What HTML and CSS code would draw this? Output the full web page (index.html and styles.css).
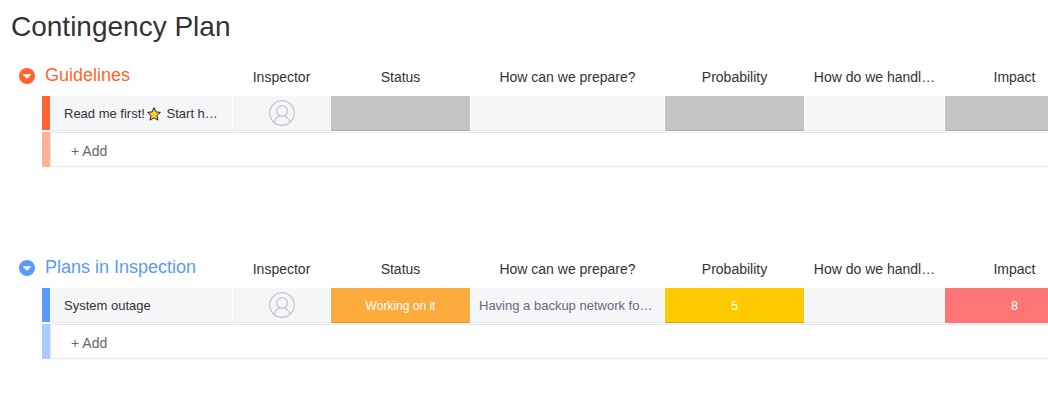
FILE: index.html
```html
<!DOCTYPE html>
<html lang="en">
<head>
    <meta charset="UTF-8">
    <meta name="viewport" content="width=device-width, initial-scale=1.0">
    <title>Contingency Plan</title>
    <link rel="stylesheet" href="styles.css">
</head>
<body>
    <!-- shared icons -->
    <svg class="icon-defs" aria-hidden="true">
        <symbol id="icon-collapse" viewBox="0 0 16 16">
            <circle cx="8" cy="8" r="8" fill="currentColor"/>
            <path d="M4.2 6.2h7.6q.7.2.2.8L8.6 10.2q-.6.5-1.2 0L4 7q-.5-.6.2-.8z" fill="#fff"/>
        </symbol>
        <symbol id="icon-person" viewBox="0 0 26 26">
            <g fill="none" stroke="currentColor" stroke-width="1.3">
                <circle cx="13" cy="13" r="12.3"/>
                <circle cx="13" cy="11" r="5.4"/>
                <path d="M4.9 22.2C6.1 18.8 8.7 16.9 10.7 16M15.3 16c2 .9 4.6 2.8 5.8 6.2"/>
            </g>
        </symbol>
    </svg>

    <main class="board">
        <h1 class="board-title">Contingency Plan</h1>

        <!-- Guidelines -->
        <table class="group group-orange">
            <colgroup>
                <col class="col-gutter">
                <col class="col-bar">
                <col class="col-name">
                <col class="col-person">
                <col class="col-status">
                <col class="col-text">
                <col class="col-status">
                <col class="col-status">
                <col class="col-status">
            </colgroup>
            <thead>
                <tr>
                    <th colspan="3" scope="col">
                        <div class="group-header">
                            <button class="collapse-button" type="button" aria-label="Collapse group">
                                <svg class="collapse-icon"><use href="#icon-collapse"/></svg>
                            </button>
                            <h2 class="group-title">Guidelines</h2>
                        </div>
                    </th>
                    <th class="column-title" scope="col">Inspector</th>
                    <th class="column-title" scope="col">Status</th>
                    <th class="column-title" scope="col">How can we prepare?</th>
                    <th class="column-title" scope="col">Probability</th>
                    <th class="column-title" scope="col">How do we handl…</th>
                    <th class="column-title" scope="col">Impact</th>
                </tr>
            </thead>
            <tbody>
                <tr class="item-row">
                    <td class="gutter"></td>
                    <td class="bar"></td>
                    <td class="cell name">Read me first!<svg class="star" viewBox="1 1 14 14" aria-hidden="true"><path d="M8 1.7l1.9 4.2 4.5.5-3.4 3.1 1 4.6L8 11.8l-4 2.3 1-4.6-3.4-3.1 4.5-.5z" fill="#ffc83d" stroke="#2b2520" stroke-width="1" stroke-linejoin="round"/></svg> Start h…</td>
                    <td class="cell person"><svg class="person-icon"><use href="#icon-person"/></svg></td>
                    <td class="cell status empty"></td>
                    <td class="cell text"></td>
                    <td class="cell status empty"></td>
                    <td class="cell text"></td>
                    <td class="cell status empty"></td>
                </tr>
                <tr class="add-row">
                    <td class="gutter"></td>
                    <td class="bar"></td>
                    <td class="add-cell" colspan="7"><input class="add-input" type="text" placeholder="+ Add" aria-label="Add item to Guidelines"></td>
                </tr>
            </tbody>
        </table>

        <!-- Plans in Inspection -->
        <table class="group group-blue">
            <colgroup>
                <col class="col-gutter">
                <col class="col-bar">
                <col class="col-name">
                <col class="col-person">
                <col class="col-status">
                <col class="col-text">
                <col class="col-status">
                <col class="col-status">
                <col class="col-status">
            </colgroup>
            <thead>
                <tr>
                    <th colspan="3" scope="col">
                        <div class="group-header">
                            <button class="collapse-button" type="button" aria-label="Collapse group">
                                <svg class="collapse-icon"><use href="#icon-collapse"/></svg>
                            </button>
                            <h2 class="group-title">Plans in Inspection</h2>
                        </div>
                    </th>
                    <th class="column-title" scope="col">Inspector</th>
                    <th class="column-title" scope="col">Status</th>
                    <th class="column-title" scope="col">How can we prepare?</th>
                    <th class="column-title" scope="col">Probability</th>
                    <th class="column-title" scope="col">How do we handl…</th>
                    <th class="column-title" scope="col">Impact</th>
                </tr>
            </thead>
            <tbody>
                <tr class="item-row">
                    <td class="gutter"></td>
                    <td class="bar"></td>
                    <td class="cell name">System outage</td>
                    <td class="cell person"><svg class="person-icon"><use href="#icon-person"/></svg></td>
                    <td class="cell status working">Working on it</td>
                    <td class="cell text">Having a backup network fo…</td>
                    <td class="cell status medium">5</td>
                    <td class="cell text"></td>
                    <td class="cell status high">8</td>
                </tr>
                <tr class="add-row">
                    <td class="gutter"></td>
                    <td class="bar"></td>
                    <td class="add-cell" colspan="7"><input class="add-input" type="text" placeholder="+ Add" aria-label="Add item to Plans in Inspection"></td>
                </tr>
            </tbody>
        </table>
    </main>
</body>
</html>
```

FILE: styles.css
```css
/* Base */
* {
    box-sizing: border-box;
}
body {
    margin: 0;
    background: #fff;
    color: #333;
    font-family: "Liberation Sans", Arial, sans-serif;
    font-size: 13px;
}
.icon-defs {
    display: none;
}

/* Board */
.board {
    padding: 11px 0 0 19px;
    overflow: hidden;
}
.board-title {
    margin: 0 0 15px -8px;
    color: #323338;
    font-size: 28px;
    font-weight: normal;
    line-height: 32px;
}

/* Group table */
.group {
    width: 100%;
    margin-bottom: 83px;
    table-layout: fixed;
    border-collapse: separate;
    border-spacing: 0;
}
.group:last-child {
    margin-bottom: 0;
}
.group-orange {
    --group-color: #ff642e;
    --group-light: #ffb199;
}
.group-blue {
    --group-color: #579bfc;
    --group-light: #abcdfd;
}
.col-gutter {
    width: 23px;
}
.col-bar {
    width: 8px;
}
.col-name {
    width: 183px;
}
.col-person {
    width: 98px;
}
.col-status {
    width: 140px;
}
.col-text {
    width: 194px;
}
th,
td {
    padding: 0;
}

/* Group header */
th {
    height: 38px;
    font-weight: normal;
}
.group-header {
    display: flex;
    align-items: center;
    gap: 10px;
    padding-bottom: 3px;
    color: var(--group-color);
}
.group-title {
    margin: 0;
    padding-bottom: 2px;
    font-size: 18px;
    font-weight: normal;
    line-height: 18px;
}
.collapse-button {
    padding: 0;
    border: none;
    background: none;
    color: inherit;
    cursor: pointer;
}
.collapse-icon {
    display: block;
    width: 16px;
    height: 16px;
}
.column-title {
    padding: 0 9px 0 8px;
    overflow: hidden;
    font-size: 14px;
    text-align: center;
    text-overflow: ellipsis;
    white-space: nowrap;
}

/* Item row */
.item-row td {
    height: 36px;
    border-bottom: 1px solid #fff;
}
.bar {
    background: var(--group-color);
}
.item-row .bar {
    border-bottom-width: 2px;
}
.cell {
    border-right: 1px solid #fff;
    background: #f5f6f8;
    box-shadow: inset 0 -1px #e6e9ef;
    overflow: hidden;
    text-overflow: ellipsis;
    white-space: nowrap;
}
.name {
    padding: 0 8px 0 14px;
}
.star {
    width: 14px;
    height: 14px;
    margin: 0 2px;
    vertical-align: -3px;
}
.person {
    padding-bottom: 1px;
}
.person-icon {
    display: block;
    width: 26px;
    height: 26px;
    margin: 0 auto;
    color: #c4c6cc;
}
.text {
    padding: 0 8px;
    color: #676879;
}

/* Status labels */
.status {
    color: #fff;
    font-size: 12px;
    text-align: center;
    box-shadow: inset 0 -1px rgba(0, 0, 0, 0.12);
}
.empty {
    background: #c4c4c4;
}
.working {
    background: #fdab3d;
}
.medium {
    background: #ffcb00;
    box-shadow: inset 0 -1px #c9a819;
}
.high {
    background: #ff7575;
    box-shadow: none;
}

/* Add row */
.add-row .bar {
    background: var(--group-light);
}
.add-cell {
    height: 35px;
    border: 1px solid #e6e9ef;
}
.add-input {
    display: block;
    width: 100%;
    padding: 2px 20px 0;
    border: none;
    outline: none;
    background: none;
    color: #333;
    font-family: inherit;
    font-size: 14px;
}
.add-input::placeholder {
    color: #676767;
    opacity: 1;
}
```
